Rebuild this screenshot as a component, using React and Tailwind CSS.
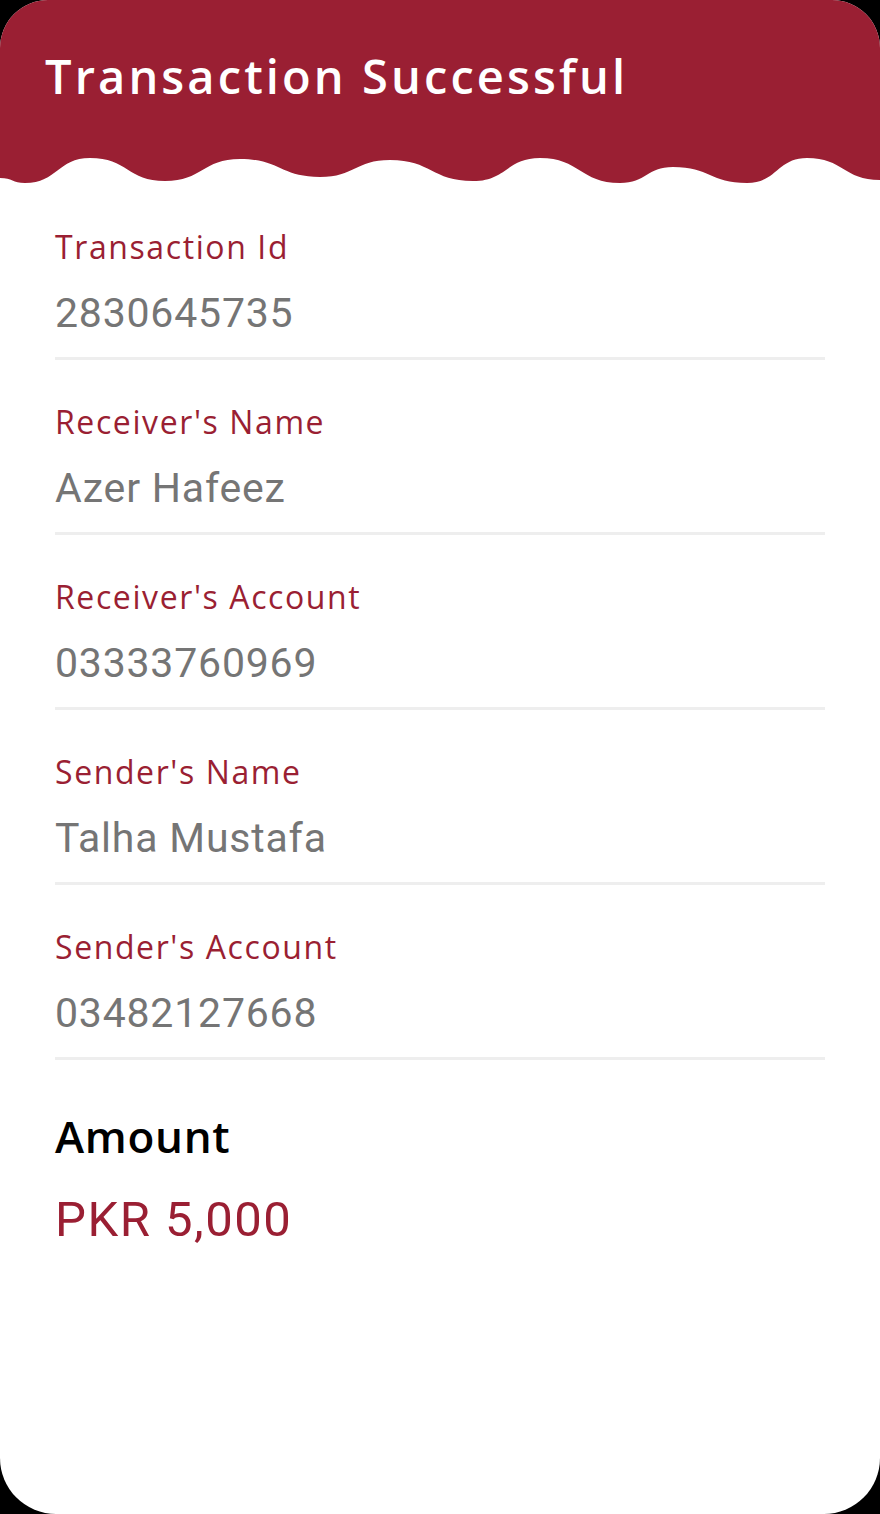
const rows = [
  { label: "Transaction Id", value: "2830645735" },
  { label: "Receiver's Name", value: "Azer Hafeez" },
  { label: "Receiver's Account", value: "03333760969" },
  { label: "Sender's Name", value: "Talha Mustafa" },
  { label: "Sender's Account", value: "03482127668" },
];

// wave extremes along the bottom edge of the header
const wavePoints = [
  [0, 178], [25, 183], [90, 158], [165, 181], [240, 159], [320, 177], [390, 160],
  [473, 181], [540, 158], [620, 183], [673, 167], [747, 183], [807, 158], [880, 180],
];

const wavePath = () => {
  let d = `M0,150 L0,${wavePoints[0][1]}`;
  for (let i = 1; i < wavePoints.length; i++) {
    const [x1, y1] = wavePoints[i - 1];
    const [x2, y2] = wavePoints[i];
    const mx = (x1 + x2) / 2;
    d += ` C${mx},${y1} ${mx},${y2} ${x2},${y2}`;
  }
  return d + " L880,150 Z";
};

const App = () => {
  return (
    <div className="h-[1514px] w-[880px] bg-black">
      <div className="h-full w-full bg-white rounded-t-[48px] rounded-b-[56px] overflow-hidden">
        {/* Header */}
        <div className="bg-[#9a1f33] h-[155px] pl-[45px] pt-[48px]">
          <h1 className="text-white text-[47px] leading-[56px] font-semibold tracking-[3.1px] font-['Open_Sans',sans-serif]">
            Transaction Successful
          </h1>
        </div>
        <svg className="block" width="880" height="30" viewBox="0 155 880 30">
          <path d={wavePath()} fill="#9a1f33" />
        </svg>

        {/* Details */}
        <div className="px-[55px]">
          {rows.map((row) => (
            <div key={row.label} className="pt-[42px]">
              <div className="h-[40px] text-[32px] leading-[40px] tracking-[1.6px] text-[#9a1f33] font-['Open_Sans',sans-serif]">
                {row.label}
              </div>
              <div className="mt-[22px] h-[48px] text-[41px] leading-[48px] tracking-[0.8px] text-[#757575] font-['Roboto',sans-serif]">
                {row.value}
              </div>
              <div className="mt-[20px] h-[3px] bg-[#eeeeee]" />
            </div>
          ))}

          <div className="mt-[50px] text-[44px] leading-[52px] font-semibold tracking-[0.7px] text-black font-['Open_Sans',sans-serif]">
            Amount
          </div>
          <div className="mt-[30px] text-[49px] leading-[56px] tracking-[1.5px] text-[#9a1f33] font-['Roboto',sans-serif]">
            PKR 5,000
          </div>
        </div>
      </div>
    </div>
  );
};

export default App;
